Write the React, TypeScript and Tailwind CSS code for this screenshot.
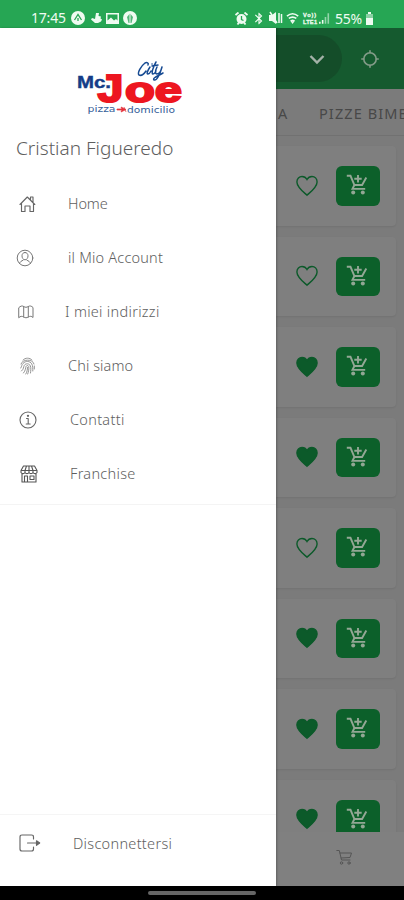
import React from "react";
import { MdBluetooth } from "react-icons/md";

type P = { className?: string };

const Line = ({ className, children, w = 1.2, box = "0 0 24 24" }: P & { children: React.ReactNode; w?: number; box?: string }) => (
  <svg viewBox={box} className={className} fill="none" stroke="currentColor" strokeWidth={w} strokeLinecap="round" strokeLinejoin="round">
    {children}
  </svg>
);

const HomeIcon = () => (
  <Line className="ml-[19px] h-[18px] w-[17px] text-[#666]" box="0 0 17 18" w={1.15}>
    <path d="M1 9.500 8.300 2 15.800 9.500M11.500 4.500V2h2.500v5M2.500 8.500v8H6V11h5v5.500h3.500v-8" />
  </Line>
);
const AccountIcon = () => (
  <Line className="ml-4 h-[18px] w-[18px] text-[#777]" box="0 0 18 18" w={1}>
    <circle cx="9" cy="9" r="7.800" />
    <path d="M9 3.500c-2 0-3 1.500-3 3.300 0 2 1 4 3 4s3-2 3-4c0-1.800-1-3.300-3-3.300ZM3.500 14.500c.5-2 2-2.500 3.500-3.200M14.500 14.500c-.5-2-2-2.500-3.500-3.200" />
  </Line>
);
const MapIcon = () => (
  <Line className="ml-[18px] h-4 w-4 text-[#777]" box="0 0 16 16" w={1}>
    <path d="M1 3.500C2.500 2 4 1.500 5.700 2.500c1.500 1 3 1 4.600 0 1.700-1 3.200-.5 4.700 1v10c-1.500-1.500-3-1.500-4.700-.5-1.600 1-3.100 1-4.600 0-1.700-1-3.200-1-4.700.5ZM5.700 2.500V13M10.300 2.500V13" />
  </Line>
);
const FingerIcon = () => (
  <Line className="ml-5 h-[18px] w-[15px] text-[#888]" box="0 0 15 18" w={0.9}>
    <path d="M3 3C5.500.5 9.500.5 12 3M1 7c1-5 12-5.500 13 0M.8 11C2 9 1.500 8 3 6.500c2.500-3 7-2.500 8.700.3C13 9 12.800 12 12.800 14M1.500 14C4 12 3.300 10 4.300 8.300c1.400-2.200 5-2 6 .5.9 2 .5 5 .2 7.200M3.500 16c2.200-2.500 2-5 2.500-6.500.5-1.200 2.200-1.300 2.700 0 .5 2-.2 5.500-1 7.500M5.800 17c1.300-2 1.600-4.300 1.700-6.500M14.300 9v3" />
  </Line>
);
const InfoIcon = () => (
  <Line className="ml-[19px] h-[18px] w-[18px] text-[#666]" box="0 0 18 18" w={1.1}>
    <circle cx="9" cy="9" r="8" />
    <path d="M7.500 7.500H9.200V13M7.200 13h4" />
    <circle cx="9" cy="4.800" r=".6" fill="currentColor" />
  </Line>
);
const StoreIcon = () => (
  <Line className="ml-5 h-[18px] w-[18px] text-[#555]" box="0 0 18 18" w={1.1}>
    <path d="M3.500 1h11L17 5.500v2c-1 1.500-3 1.500-4 0-1 1.500-3 1.500-4 0-1 1.500-3 1.500-4 0-1 1.500-3 1.500-4 0v-2ZM1 5.500h16M6.500 1 5 5.500v2M11.500 1 13 5.500v2M9 1v6.500M2 9v8h14V9M4.500 16.500V11h3v5.500M10 11h4v3.500h-4Z" />
  </Line>
);
const ExitIcon = () => (
  <Line className="ml-[19px] h-[18px] w-[22px] text-[#666]" box="0 0 22 18" w={1.15}>
    <path d="M14.500 5V3Q14.500 1 12.500 1H3Q1 1 1 3v12q0 2 2 2h9.500q2 0 2-2v-2M8.500 9H20" />
    <path d="m17.500 6.700 3.200 2.300-3.200 2.300Z" fill="currentColor" />
  </Line>
);

const Heart = ({ full }: { full: boolean }) => (
  <svg viewBox="0 0 24 24" className="h-6 w-6 shrink-0" fill={full ? "#0c5a2a" : "none"} stroke="#0c5a2a" strokeWidth={1.4}>
    <path d="M12 21.200C8 17.700 1.900 13 1.900 7.900 1.900 4.700 4.200 2.500 7 2.500c2.100 0 4 1.200 5 3 1-1.800 2.900-3 5-3 2.800 0 5.100 2.200 5.100 5.400 0 5.100-6.100 9.800-10.100 13.300Z" />
  </svg>
);

const AddCart = () => (
  <svg viewBox="0 0 22 22" className="mr-[2px] mb-[1px] h-[22px] w-[22px]" fill="none" stroke="#93a795" strokeWidth="1.900">
    <path d="M.8 1.800h3.700l3.900 9.200h7.700l4.200-7.500M12 1v7.500M8.300 4.700h7.400M8.400 11l-1.900 3.900h12.700" />
    <circle cx="7.200" cy="18.500" r="2" fill="#93a795" stroke="none" />
    <circle cx="16.800" cy="18.500" r="2" fill="#93a795" stroke="none" />
  </svg>
);

const Logo = () => (
  <svg viewBox="0 0 110 58" className="ml-[75px] h-[58px] w-[110px]" fontFamily="Liberation Sans, Arial, sans-serif">
    <text x="2" y="30" fontSize="16" fontWeight="700" fill="#143c87" stroke="#143c87" strokeWidth=".4" textLength="34" lengthAdjust="spacingAndGlyphs">Mc.</text>
    <g fill="#ed1620" stroke="#ed1620" strokeWidth="2" fontSize="39" fontWeight="700">
      <text x="22.500" y="43.500" textLength="26" lengthAdjust="spacingAndGlyphs">J</text>
      <text x="50" y="43.500" fontSize="35" textLength="57" lengthAdjust="spacingAndGlyphs">oe</text>
    </g>
    <g fill="none" stroke="#164a92" strokeWidth="1.500" strokeLinecap="round" strokeLinejoin="round">
      <path d="M73 7c1-2-1-3-3-2-4 3-8 10-6 12 2 1 5-1 7-4M75 9c-2 3-4 7-2 7 1 0 2-1 3-3M77 6l.1 0M81 4c-3 5-5 12-3 12 1 0 2-1 3-3M77 8l6-1M82 9c-2 4-2 7 0 7s4-3 5-7c-2 7-5 14-8 13-2-2 4-4 9-7" />
    </g>
    <g fontSize="9.500" fill="#365f9a" fontFamily="DejaVu Sans, sans-serif">
      <text x="12.500" y="53.500" textLength="28" lengthAdjust="spacingAndGlyphs">pizza</text>
      <text x="52" y="55" textLength="48" lengthAdjust="spacingAndGlyphs">domicilio</text>
    </g>
    <path d="M42 51h5l-1-2 5 2.500-5 2.500 1-2h-5ZM49 49l2 5" stroke="#e4303a" fill="#e4303a" strokeWidth=".7" />
  </svg>
);

const rows = [
  { label: "Home", Icon: HomeIcon, pad: "pl-[68px]", w: "tracking-[-0.1px]" },
  { label: "il Mio Account", Icon: AccountIcon, pad: "pl-[68px]", w: "tracking-[0.2px]" },
  { label: "I miei indirizzi", Icon: MapIcon, pad: "pl-[65px]", w: "tracking-[0.3px]" },
  { label: "Chi siamo", Icon: FingerIcon, pad: "pl-[68px]", w: "tracking-[0.1px]" },
  { label: "Contatti", Icon: InfoIcon, pad: "pl-[70px]", w: "tracking-[0.3px]" },
  { label: "Franchise", Icon: StoreIcon, pad: "pl-[70px]", w: "tracking-[0.3px]" },
];

function StatusBar() {
  return (
    <header className="flex h-[28px] shrink-0 items-center bg-[#26a654] pt-2 text-[#effbf1]">
      <span className="ml-[31px] w-[40px] text-[14px] leading-5 tracking-[-0.2px]">17:45</span>
      <svg viewBox="0 0 68 16" className="h-4 w-[68px] shrink-0" fill="currentColor">
        <circle cx="7" cy="8" r="7" />
        <path d="m3.500 10 3.500-5.500 3.500 5.500M7 8v3" fill="none" stroke="#26a654" strokeWidth="1.300" />
        <path d="M25 3h3l-.5 3 2.500.5-.5 2 1.500 1-1 2-3 1.500h-3l-4-3.500 1-1.500 3 1Z" />
        <path fillRule="evenodd" d="M35 3h13v11H35Zm1.500 1.500v6L40 7.500l3 3 2-1.500 1.500 1.500v-6Z" />
        <path d="m36.500 12.500 3.500-3 3 2 3-1v2Z" />
        <circle cx="59" cy="8" r="7" />
        <path d="M59 3.500 62 7l-1.500 6h-3L56 7Z" fill="#52b678" />
        <path d="M59 3v10" stroke="#effbf1" />
      </svg>
      <div className="ml-[96px] flex items-center">
        <svg viewBox="0 0 13 13" className="h-[13px] w-[13px]" fill="currentColor">
          <circle cx="6.500" cy="7" r="5" />
          <path d="m.5 3 3-2.500M12.500 3l-3-2.500M2.500 12.500l1.500-2M10.500 12.500l-1.500-2" stroke="currentColor" strokeWidth="1.800" />
          <path d="M6.500 4v3.500l2 1" stroke="#26a654" strokeWidth="1.300" fill="none" />
        </svg>
        <MdBluetooth className="ml-1 h-[15px] w-[14px]" />
        <svg viewBox="0 0 14 14" className="ml-[3px] h-[14px] w-[14px]" fill="currentColor">
          <path d="M0 4h3l4-3v12L3 10H0Z" />
          <path d="m1 1 7 11M10 2v10M12.500 3v9" stroke="currentColor" strokeWidth="1.500" />
        </svg>
        <svg viewBox="0 0 50 16" className="ml-[3px] h-4 w-[47px]" fill="none" stroke="currentColor" strokeWidth="1.700">
          <path d="M1 6q6-5 12 0M3 8.500q4-3 8 0M5.500 11q1.500-1 3 0L7 13Z" />
          <g fill="currentColor" stroke="currentColor" strokeWidth=".3" fontSize="6" fontWeight="700" fontFamily="Liberation Sans, sans-serif">
            <text x="18" y="7" textLength="14">Vo))</text>
            <text x="18" y="14" textLength="15">LTE1</text>
          </g>
          <path d="M36 14v-2M39 14v-4" />
          <path d="M42 14V7M45 14V3" opacity=".55" />
        </svg>
      </div>
      <span className="ml-[2px] text-[14px] tracking-[-0.2px]">55%</span>
      <svg viewBox="0 0 9 13" className="ml-[3px] h-[13px] w-[9px]" fill="currentColor">
        <path d="M3 0h3v2H3ZM1 6h7v7H1Z" />
        <path d="M1 2h7v4H1Z" opacity=".5" />
      </svg>
    </header>
  );
}

export default function App() {
  return (
    <div className="flex h-[900px] w-[404px] flex-col overflow-hidden bg-black font-['Noto_Sans',sans-serif]">
      <StatusBar />
      <div className="flex h-[858px] shrink-0">
        <aside className="z-10 flex w-[276px] shrink-0 flex-col bg-white shadow-[1px_0_2px_rgba(0,0,0,0.25)]">
          <div className="h-[104px] pt-[30px]"><Logo /></div>
          <h1 className="h-[45px] pl-4 text-[19px] leading-8 font-light text-[#5e5e5e]">Cristian Figueredo</h1>
          <nav className="h-[328px] shrink-0 border-b border-[#f4f4f4]">
            {rows.map(({ label, Icon, pad, w }) => (
              <div key={label} className="grid h-[54px] grid-cols-1 items-center [&>*]:col-start-1 [&>*]:row-start-1">
                <Icon />
                <span className={`${pad} ${w} text-[14.500px] font-light text-[#5e5e5e]`}>{label}</span>
              </div>
            ))}
          </nav>
          <div className="mt-auto flex h-[72px] items-start border-t border-[#f5f5f5] pt-[17px]">
            <div className="flex items-center">
              <ExitIcon />
              <span className="ml-8 text-[14.500px] leading-[22px] font-light tracking-[0.3px] text-[#5e5e5e]">Disconnettersi</span>
            </div>
          </div>
        </aside>
        <main className="flex w-[128px] flex-col overflow-hidden bg-[#7b7b7b]">
          <div className="flex h-[61px] shrink-0 items-center bg-[#155a2f]">
            <div className="flex h-[47px] w-[66px] items-center justify-end rounded-r-full bg-[#144d29] pr-[17px]">
              <Line className="h-4 w-4 text-[#a4b2a8]" box="0 0 16 16" w={2.4}><path d="m1.500 5 6.500 6.500L14.500 5" strokeLinecap="butt" strokeLinejoin="miter" /></Line>
            </div>
            <Line className="ml-[19px] h-[18px] w-[18px] text-[#839b88]" box="0 0 18 18" w={1.6}>
              <circle cx="9" cy="9" r="6.200" /><path d="M9 .8v2M9 15.200v2M.8 9h2M15.200 9h2" />
            </Line>
          </div>
          <div className="flex h-[47px] shrink-0 items-center border-b border-[#717171] pt-1 text-[14.500px] tracking-[1.1px] whitespace-nowrap text-[#484848]">
            <span className="ml-[2px] w-[41px] shrink-0">A</span>
            <span>PIZZE BIMB</span>
          </div>
          <div className="flex h-[696px] shrink-0 flex-col gap-[11px] overflow-hidden pt-[10px]">
            {[false, false, true, true, false, true, true, true].map((full, i) => (
              <div key={i} className="flex h-[79.500px] w-[120px] shrink-0 items-center rounded-r-[4px] bg-[#7f7f7f] pl-[19px] shadow-[0_1px_2px_rgba(0,0,0,0.08)]">
                <Heart full={full} />
                <div className="ml-[17px] flex h-[39.500px] w-[44px] items-center justify-center rounded-[6px] bg-[#0c602a]">
                  <AddCart />
                </div>
              </div>
            ))}
          </div>
          <div className="h-[54px] shrink-0 bg-[#808080] pt-[17px] pl-[60px]">
            <Line className="h-[17px] w-[17px] text-[#555]" box="0 0 17 17" w={1}>
              <path d="M.8 1.500h2.500l2.200 9.500h8.500M4 4h11.500L14 8.500 5.200 9" /><circle cx="5.500" cy="14" r="1.200" /><circle cx="13" cy="14" r="1.200" />
            </Line>
          </div>
        </main>
      </div>
      <footer className="flex h-[14px] shrink-0 justify-center bg-black pt-[5px]">
        <div className="h-1 w-[108px] rounded-full bg-[#666]" />
      </footer>
    </div>
  );
}
